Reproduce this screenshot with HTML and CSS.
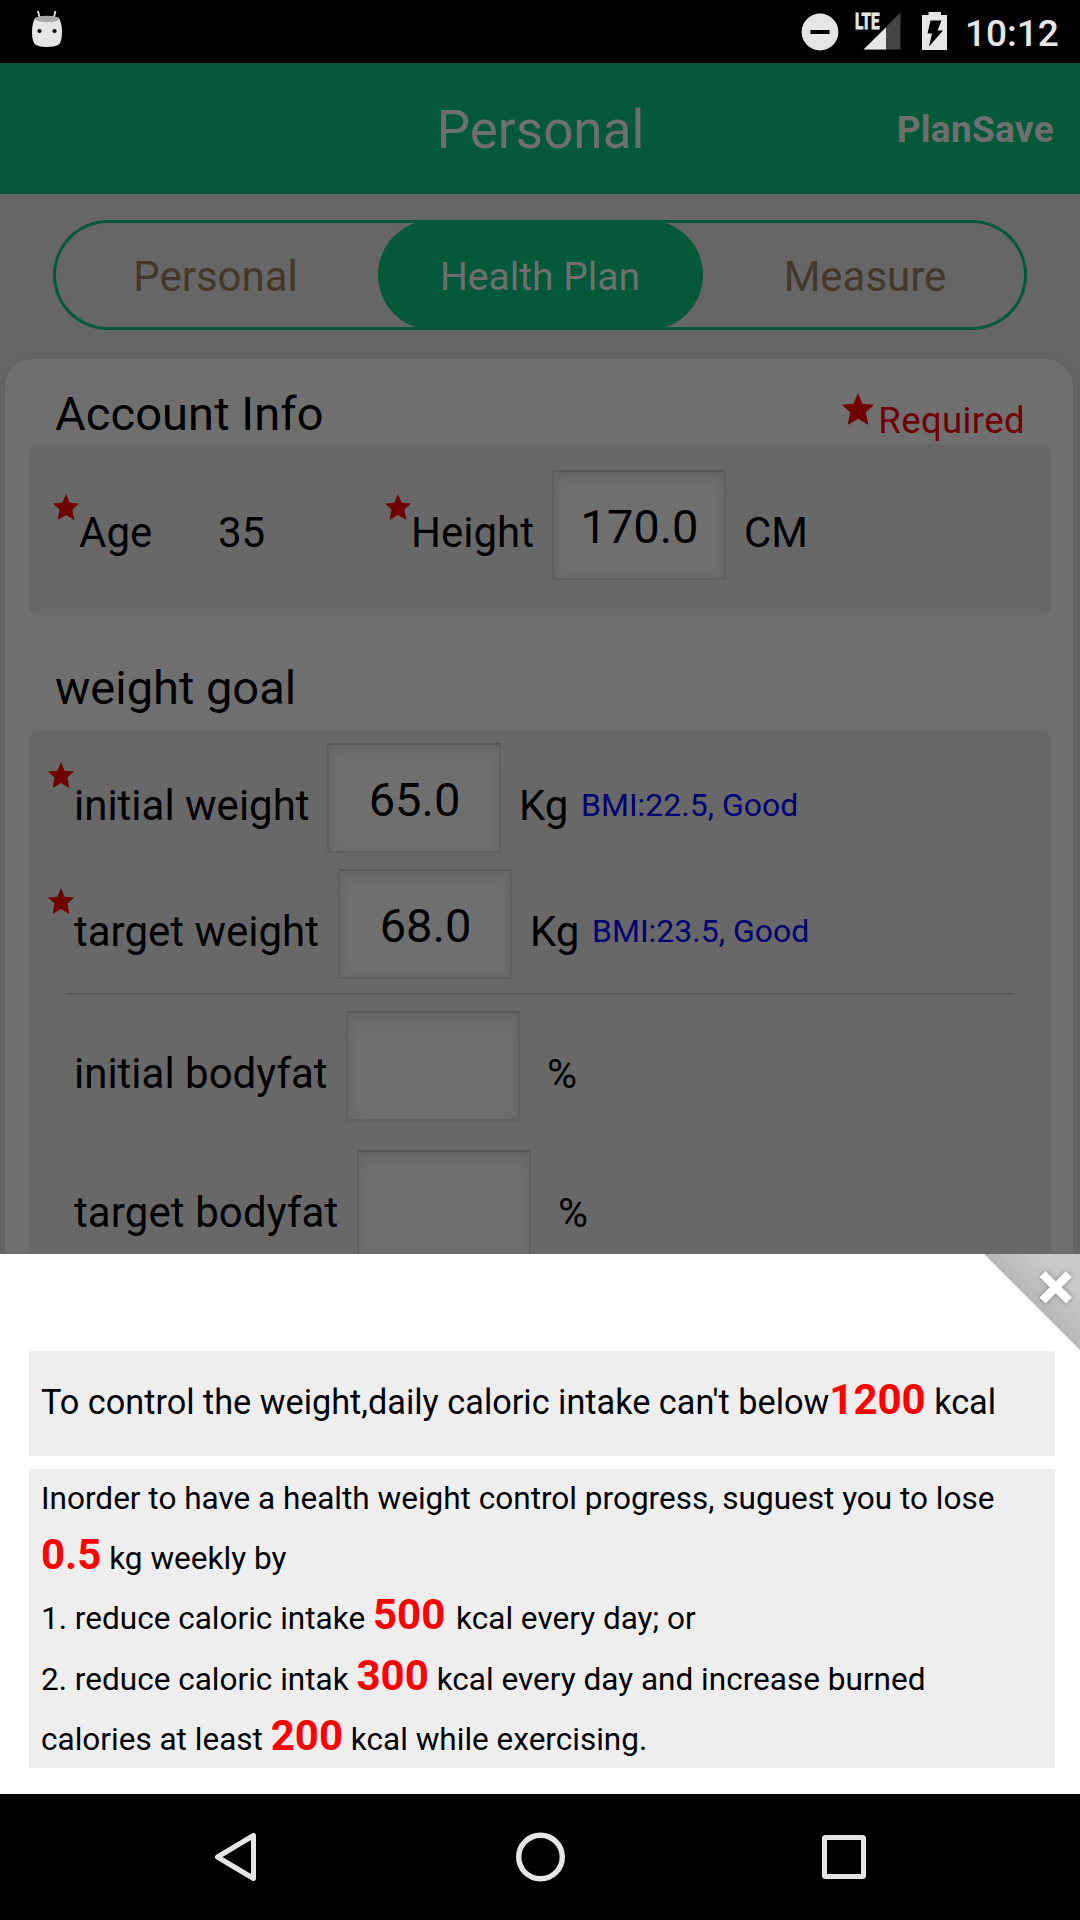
FILE: index.html
```html
<!DOCTYPE html>
<html lang="en">
<head>
<meta charset="utf-8">
<title>Personal</title>
<link rel="stylesheet" href="styles.css">
</head>
<body>
<svg class="defs" aria-hidden="true">
  <symbol id="star" viewBox="0 0 26 26"><path d="M13 0l3.6 8.8 9.4.8-6.6 6 2 10.4L13 21l-8.400 5 2-10.400L0 9.600l9.400-.8z"/></symbol>
</svg>
<div class="phone">
  <div class="statusbar">
    <svg class="status-robot" width="32" height="38" viewBox="0 0 32 38">
      <path d="M7 1l2 8M24.500 1l-2 8" stroke="#e6e6e6" stroke-width="1.800" fill="none"/>
      <path d="M4 8Q16 4 28 8 31 14 31 22 31 30 28.500 34 25 37 16 37 7 37 3.500 34 1 30 1 22 1 14 4 8z" fill="#e6e6e6"/>
      <ellipse cx="16" cy="9" rx="12" ry="3.300" fill="#a8a8a8"/>
      <circle cx="8.500" cy="21" r="2.100"/><circle cx="23.500" cy="21" r="2.100"/>
    </svg>
    <div class="status-right">
      <svg width="148" height="60" viewBox="801 0 148 60">
        <circle cx="820" cy="32" r="18.400" fill="#e6e6e6"/>
        <path d="M810.500 32h19" stroke="#000" stroke-width="4"/>
        <path d="M900.500 12.500v37h-37z" fill="#444"/>
        <path d="M886 27.500v22h-22.500z" fill="#e6e6e6"/>
        <text class="lte" x="855" y="29" textLength="24.500" lengthAdjust="spacingAndGlyphs">LTE</text>
        <path d="M922 15h6.500v-3h12.500v3h6v35h-25z" fill="#e6e6e6"/>
        <path d="M930.500 20.500h11l-4 10h5.500l-14 16 3-13h-4.500z" fill="#000"/>
      </svg>
      <span class="clock">10:12</span>
    </div>
  </div>

  <div class="screen">
    <div class="titlebar">
      <span></span>
      <span class="title">Personal</span>
      <span class="save">PlanSave</span>
    </div>
    <div class="tabs">
      <span class="tab">Personal</span>
      <span class="tab tab-active">Health Plan</span>
      <span class="tab">Measure</span>
    </div>
    <div class="card">
      <div class="card-head">
        <span class="heading">Account Info</span>
        <span class="required"><svg class="star-lg"><use href="#star"/></svg><span>Required</span></span>
      </div>
      <div class="panel panel-account">
        <div class="row">
          <svg class="star"><use href="#star"/></svg><span class="label w-age">Age</span><span class="label w-years">35</span>
          <svg class="star"><use href="#star"/></svg><span class="label w-height">Height</span>
          <div class="field">170.0</div><span class="label unit">CM</span>
        </div>
      </div>
      <div class="goal-head"><span class="heading">weight goal</span></div>
      <div class="panel panel-goal">
        <div class="row row-initial">
          <svg class="star"><use href="#star"/></svg><span class="label w-iw">initial weight</span>
          <div class="field">65.0</div><span class="label unit w-kg">Kg</span><span class="bmi">BMI:22.5, Good</span>
        </div>
        <div class="row row-target">
          <svg class="star"><use href="#star"/></svg><span class="label w-tw">target weight</span>
          <div class="field">68.0</div><span class="label unit w-kg">Kg</span><span class="bmi">BMI:23.5, Good</span>
        </div>
        <div class="divider"></div>
        <div class="row row-fat">
          <span class="label w-ib">initial bodyfat</span><div class="field"></div><span class="label percent">%</span>
        </div>
        <div class="row row-fat-target">
          <span class="label w-tb">target bodyfat</span><div class="field"></div><span class="label percent">%</span>
        </div>
      </div>
    </div>
  </div>

  <div class="sheet">
    <div class="sheet-top">
      <svg width="96" height="96" viewBox="0 0 96 96">
        <defs><linearGradient id="fold" x1=".45" y1=".55" x2=".8" y2=".2"><stop offset="0" stop-color="#b4b4b4"/><stop offset="1" stop-color="#c8c9ca"/></linearGradient></defs>
        <path d="M0 0h96v96z" fill="url(#fold)"/>
        <path class="close-x" d="M58.500 20l26.500 26.500M85 20L58.500 46.500" stroke="#fff" stroke-width="8.500"/>
      </svg>
    </div>
    <p class="note note-limit">To control the weight,daily caloric intake can't below<b>1200</b> kcal</p>
    <div class="note note-advice">
      <p>Inorder to have a health weight control progress, suguest you to lose</p>
      <p><b>0.5</b> kg weekly by</p>
      <p>1. reduce caloric intake <b class="spaced">500</b> kcal every day; or</p>
      <p>2. reduce caloric intak <b>300</b> kcal every day and increase burned</p>
      <p>calories at least <b>200</b> kcal while exercising.</p>
    </div>
  </div>

  <div class="navbar">
    <svg width="50" height="56" viewBox="0 0 50 56"><path d="M41.500 6.500v43L5.500 28z" fill="none" stroke="#e6e6e6" stroke-width="5" stroke-linejoin="round"/></svg>
    <svg width="56" height="56" viewBox="0 0 56 56"><circle cx="27.500" cy="28" r="21.800" fill="none" stroke="#e6e6e6" stroke-width="5.400"/></svg>
    <svg width="50" height="56" viewBox="0 0 50 56"><rect x="5.500" y="8.500" width="39" height="39" rx="1" fill="none" stroke="#e6e6e6" stroke-width="5"/></svg>
  </div>
</div>
</body>
</html>
```
FILE: styles.css
```css
* { box-sizing: border-box; }
body { margin: 0; background: #000; font-family: Roboto, "Noto Sans", sans-serif; color: #000; }
p { margin: 0; }
svg { display: block; flex: none; }
.defs { width: 0; height: 0; position: absolute; }
.phone { width: 1080px; height: 1920px; display: flex; flex-direction: column; overflow: hidden; }

.statusbar { height: 63px; flex: none; background: #000; display: flex; justify-content: space-between; padding: 0 21px 0 31px; }
.status-robot { margin-top: 10px; }
.status-right { display: flex; }
.clock { color: #e6e6e6; font-size: 37px; font-weight: 500; line-height: 42px; width: 94px; margin: 13px 0 0 16px; white-space: nowrap; }
.lte { font: 700 22px Roboto, sans-serif; fill: #e6e6e6; stroke: #e6e6e6; stroke-width: .9px; }

.screen { height: 1191px; flex: none; overflow: hidden; background: #666; }
.titlebar { height: 131px; background: #03593a; color: #6f6f6f; display: grid; grid-template-columns: 1fr auto 1fr; align-items: center; padding: 2px 26px 0; }
.title { font-size: 53px; padding-left: 1px; }
.save { font-size: 37px; font-weight: 700; letter-spacing: .3px; text-align: right; }

.tabs { margin: 26px 53px 0; height: 110px; border-radius: 55px; display: grid; grid-template-columns: 325px 325px 324px; box-shadow: inset 0 0 0 3px #03593a; }
.tab { border-radius: 55px; display: flex; align-items: center; justify-content: center; padding-top: 3px; font-size: 42px; color: #43392a; }
.tab-active { background: #03593a; color: #6f6f6f; font-size: 39px; padding-right: 1px; }

.card { margin: 29px 7px 0 5px; height: 1000px; padding: 0 22px 0 24px; border-radius: 27px 27px 0 0; background: #6f6f6f; box-shadow: 0 0 4px 1px #616161; }
.card-head { height: 85px; display: flex; justify-content: space-between; align-items: flex-start; padding: 25px 26px 0 26px; }
.heading { font-size: 47px; line-height: 60px; white-space: nowrap; }
.card-head .heading { letter-spacing: .1px; }
.required { display: flex; color: #700000; font-size: 36.500px; letter-spacing: .4px; line-height: 60px; }
.required span { margin-top: 7px; }
.star-lg { width: 32px; height: 32px; margin: 9px 4px 0 0; fill: #700000; }
.star { width: 26px; height: 26px; align-self: flex-start; margin-top: 20px; fill: #700000; }

.panel { background: #686868; border-radius: 10px; }
.panel-account { height: 171px; padding: 25px 0 0 24px; }
.panel-account .star { margin-top: 25px; }
.goal-head { height: 115px; padding: 43px 0 0 26px; }
.panel-goal { height: 600px; padding: 12px 0 0 19px; }
.row { height: 111px; display: flex; align-items: center; }
.row-target { margin-top: 15px; }
.row-fat, .row-fat-target { padding-left: 26px; }
.row-fat { margin-top: 15px; }
.row-fat-target { margin-top: 28px; }
.label { flex: none; font-size: 42px; line-height: 60px; padding-top: 16px; white-space: nowrap; }
.w-age { width: 139px; }
.w-years { width: 167px; }
.w-height { width: 141px; }
.w-iw { width: 253px; }
.w-tw { width: 264px; }
.w-ib { width: 272px; }
.w-tb { width: 283px; letter-spacing: .1px; }
.w-kg { width: 80px; }
.unit { padding-left: 18px; }
.percent { padding-left: 27px; font-size: 41px; }
.bmi { font-size: 32px; line-height: 60px; padding-top: 15px; color: #000070; white-space: nowrap; }
.field { flex: none; width: 174px; height: 110px; margin-top: 1px; border: 2px solid #606060; border-top-color: #595959; background: #6f6f6f; box-shadow: inset 0 8px 16px -4px #656565, inset 0 0 8px #696969; font-size: 47px; line-height: 110px; text-align: center; padding-left: 1px; }
.divider { margin: 14px 37px 0 18px; height: 2px; background: #595959; }

.sheet { height: 540px; flex: none; background: #fff; padding: 0 25px 0 29px; }
.sheet-top { height: 97px; display: flex; justify-content: flex-end; margin-right: -25px; }
.close-x { filter: drop-shadow(0 0 2px rgba(0, 0, 0, .35)); }
.note { background: #eee; padding-left: 12px; white-space: nowrap; }
.note b { color: #f00; font-size: 42px; font-weight: 700; line-height: 0; }
.note .spaced { padding-right: 3px; }
.note-limit { height: 105px; font-size: 34.260px; line-height: 103px; }
.note-advice { margin-top: 13px; height: 299px; font-size: 31.540px; }
.note-advice p { height: 60.200px; line-height: 59px; }

.navbar { flex: 1; background: #000; display: flex; justify-content: space-between; align-items: center; padding: 0 211px 0 212px; }
```
